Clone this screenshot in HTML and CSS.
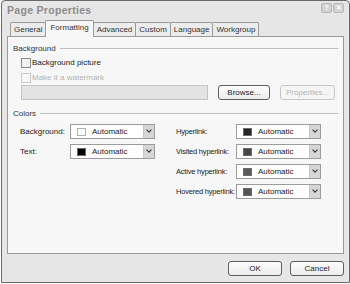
FILE: index.html
```html
<!DOCTYPE html>
<html lang="en">
<head>
  <meta charset="UTF-8" />
  <title>Page Properties</title>
  <link rel="stylesheet" href="styles.css">
</head>
<body>
  <div class="window">
    <div class="titlebar">
      <span class="title">Page Properties</span>
      <div class="caption-buttons">
        <span class="cap-btn">?</span>
        <span class="cap-btn">&#x2715;</span>
      </div>
    </div>

    <div class="tabs">
      <span class="tab">General</span>
      <span class="tab active">Formatting</span>
      <span class="tab">Advanced</span>
      <span class="tab">Custom</span>
      <span class="tab">Language</span>
      <span class="tab">Workgroup</span>
    </div>

    <div class="panel">
      <div class="group-title">Background</div>
      <div class="group-body">
        <label class="check"><span class="box"></span>Background picture</label>
        <label class="check disabled"><span class="box"></span>Make it a watermark</label>
        <div class="file-row">
          <span class="file-field"></span>
          <button class="btn">Browse...</button>
          <button class="btn disabled">Properties...</button>
        </div>
      </div>

      <div class="group-title">Colors</div>
      <div class="colors">
        <div class="col left">
          <div class="row">
            <span class="label">Background:</span>
            <div class="select"><span class="swatch white"></span>Automatic<span class="arrow"></span></div>
          </div>
          <div class="row">
            <span class="label">Text:</span>
            <div class="select"><span class="swatch black"></span>Automatic<span class="arrow"></span></div>
          </div>
        </div>
        <div class="col right">
          <div class="row">
            <span class="label">Hyperlink:</span>
            <div class="select"><span class="swatch" style="background:#262626"></span>Automatic<span class="arrow"></span></div>
          </div>
          <div class="row">
            <span class="label">Visited hyperlink:</span>
            <div class="select"><span class="swatch" style="background:#474747"></span>Automatic<span class="arrow"></span></div>
          </div>
          <div class="row">
            <span class="label">Active hyperlink:</span>
            <div class="select"><span class="swatch" style="background:#5a5a5a"></span>Automatic<span class="arrow"></span></div>
          </div>
          <div class="row">
            <span class="label">Hovered hyperlink:</span>
            <div class="select"><span class="swatch" style="background:#555"></span>Automatic<span class="arrow"></span></div>
          </div>
        </div>
      </div>
    </div>

    <div class="footer">
      <button class="btn wide">OK</button>
      <button class="btn wide">Cancel</button>
    </div>
  </div>
</body>
</html>
```

FILE: styles.css
```css
* {
  box-sizing: border-box;
  margin: 0;
  padding: 0;
}

body {
  background: #fff;
  font-family: 'Liberation Sans', Arial, sans-serif;
  font-size: 8px;
  color: #222;
}

.window {
  width: 349px;
  height: 283px;
  margin-left: 1px;
  border: 1px solid #6a6a6a;
  border-radius: 4px 4px 0 0;
  background: #e6e6e6;
  display: flex;
  flex-direction: column;
  padding: 0 5px;
}

.titlebar {
  height: 18px;
  display: flex;
  align-items: center;
  justify-content: space-between;
}

.title {
  font-weight: bold;
  font-size: 10.5px;
  color: #8c8c8c;
  letter-spacing: 0.3px;
}

.caption-buttons {
  display: flex;
  gap: 1px;
  margin-top: -4px;
}

.cap-btn {
  width: 11px;
  height: 10px;
  border: 1px solid #b8b8b8;
  border-radius: 2px;
  background: #d2d2d2;
  color: #fff;
  font-size: 7px;
  font-weight: bold;
  line-height: 8px;
  text-align: center;
}

.tabs {
  display: flex;
  align-items: flex-end;
  height: 17px;
  padding-left: 3px;
}

.tab {
  height: 14px;
  padding: 0 3px;
  border: 1px solid #9a9a9a;
  border-bottom: none;
  border-radius: 2px 2px 0 0;
  background: #ececec;
  line-height: 14px;
  color: #333;
  margin-right: -1px;
}

.tab.active {
  height: 17px;
  background: #f7f7f7;
  line-height: 14px;
  padding: 0 4px;
  position: relative;
  z-index: 1;
  margin-bottom: -1px;
}

.panel {
  height: 218px;
  border: 1px solid #9a9a9a;
  background: #f7f7f7;
  padding: 6px 5px 0 5px;
}

.group-title {
  display: flex;
  align-items: center;
  gap: 4px;
  height: 10px;
  color: #333;
}

.group-title::after {
  content: "";
  flex: 1;
  border-top: 1px solid #bdbdbd;
}

.group-body {
  padding: 2px 0 0 8px;
  margin-bottom: 8px;
}

.check {
  display: flex;
  align-items: center;
  height: 15px;
  color: #222;
}

.check .box {
  width: 10px;
  height: 10px;
  border: 1px solid #8a8a8a;
  background: #f0f0f0;
  margin-right: 1px;
}

.check.disabled {
  color: #b4b4b4;
}

.check.disabled .box {
  border-color: #cacaca;
  background: #f7f7f7;
}

.file-row {
  display: flex;
  align-items: center;
  gap: 10px;
}

.file-field {
  width: 187px;
  height: 15px;
  border: 1px solid #c4c4c4;
  background: #e3e3e3;
}

.btn {
  font-family: inherit;
  font-size: 8px;
  height: 15px;
  width: 52px;
  border: 1px solid #5f5f5f;
  border-radius: 3px;
  background: linear-gradient(#fdfdfd, #ececec);
  color: #222;
}

.btn.disabled {
  width: 55px;
  border-color: #c6c6c6;
  color: #b4b4b4;
  background: #f5f5f5;
}

.colors {
  display: flex;
  padding: 6px 0 0 7px;
}

.col {
  display: flex;
  flex-direction: column;
  gap: 5px;
}

.col.left {
  width: 156px;
}

.row {
  display: flex;
  align-items: center;
  height: 15px;
}

.label {
  white-space: nowrap;
}

.left .label {
  width: 50px;
}

.right .label {
  width: 60px;
  font-size: 7.5px;
  letter-spacing: -0.2px;
}

.select {
  display: flex;
  align-items: center;
  width: 85px;
  height: 15px;
  border: 1px solid #9c9c9c;
  background: #fff;
  padding-left: 6px;
}

.swatch {
  width: 9px;
  height: 8px;
  margin-right: 6px;
  border: 1px solid #6a6a6a;
}

.swatch.white {
  background: #fff;
  border-color: #b0b0b0;
}

.swatch.black {
  background: #000;
}

.arrow {
  margin-left: auto;
  width: 11px;
  height: 13px;
  background: #d6d6d6;
  border-left: 1px solid #c4c4c4;
  position: relative;
}

.arrow::after {
  content: "";
  position: absolute;
  left: 3px;
  top: 3px;
  width: 3px;
  height: 3px;
  border-right: 1.5px solid #333;
  border-bottom: 1.5px solid #333;
  transform: rotate(45deg);
}

.footer {
  display: flex;
  justify-content: flex-end;
  gap: 8px;
  padding-top: 7px;
}

.btn.wide {
  width: 54px;
}
```
